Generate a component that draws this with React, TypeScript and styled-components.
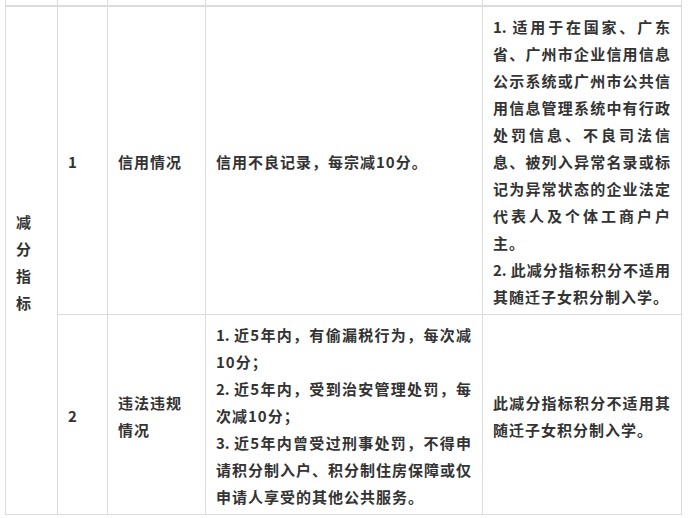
import React from "react";
import styled, { createGlobalStyle } from "styled-components";

const Global = createGlobalStyle`
  html, body {
    margin: 0;
    padding: 0;
    background: #fff;
  }
  body {
    font-family: "Noto Sans CJK SC", "Liberation Sans", sans-serif;
  }
`;

const Page = styled.div`
  padding: 0 6px 0 5px;
  width: 688px;
  height: 518px;
  box-sizing: border-box;
  overflow: hidden;
`;

const Table = styled.table`
  width: 677px;
  table-layout: fixed;
  border-collapse: collapse;
  color: #333;
  font-size: 15px;
  font-weight: bold;
  letter-spacing: 1px;
  line-height: 27px;
`;

const Cell = styled.td<{ $plain?: boolean }>`
  border: 1px solid #dcdcdc;
  padding: 6px 10px 4px 10px;
  vertical-align: middle;
  text-align: ${(p) => (p.$plain ? "left" : "justify")};
  word-break: break-all;
`;

const StubCell = styled.td`
  border: 1px solid #dcdcdc;
  border-top: none;
  border-bottom: 2px solid #dcdcdc;
  height: 5px;
  padding: 0;
`;

const Para = styled.div``;

const Num = styled.span`
  letter-spacing: 0;
  margin-right: 4px;
`;

const widths = [52, 50, 98, 277, 199];

type Item = { num?: string; text: string };

const rows: { no: string; name: string; rule: Item[]; note: Item[] }[] = [
  {
    no: "1",
    name: "信用情况",
    rule: [{ text: "信用不良记录，每宗减10分。" }],
    note: [
      {
        num: "1.",
        text: "适用于在国家、广东省、广州市企业信用信息公示系统或广州市公共信用信息管理系统中有行政处罚信息、不良司法信息、被列入异常名录或标记为异常状态的企业法定代表人及个体工商户户主。",
      },
      { num: "2.", text: "此减分指标积分不适用其随迁子女积分制入学。" },
    ],
  },
  {
    no: "2",
    name: "违法违规情况",
    rule: [
      { num: "1.", text: "近5年内，有偷漏税行为，每次减10分；" },
      { num: "2.", text: "近5年内，受到治安管理处罚，每次减10分；" },
      {
        num: "3.",
        text: "近5年内曾受过刑事处罚，不得申请积分制入户、积分制住房保障或仅申请人享受的其他公共服务。",
      },
    ],
    note: [{ text: "此减分指标积分不适用其随迁子女积分制入学。" }],
  },
];

const Lines = ({ items }: { items: Item[] }) => (
  <>
    {items.map((t) => (
      <Para key={t.text}>
        {t.num && <Num>{t.num}</Num>}
        {t.text}
      </Para>
    ))}
  </>
);

export default function App() {
  return (
    <Page>
      <Global />
      <Table>
        <colgroup>
          {widths.map((w, i) => (
            <col key={i} style={{ width: w }} />
          ))}
        </colgroup>
        <tbody>
          <tr>
            {widths.map((_, i) => (
              <StubCell key={i} />
            ))}
          </tr>
          {rows.map((r, i) => (
            <tr key={r.no}>
              {i === 0 && (
                <Cell rowSpan={2} $plain>
                  减分指标
                </Cell>
              )}
              <Cell $plain>{r.no}</Cell>
              <Cell $plain>{r.name}</Cell>
              <Cell>
                <Lines items={r.rule} />
              </Cell>
              <Cell>
                <Lines items={r.note} />
              </Cell>
            </tr>
          ))}
        </tbody>
      </Table>
    </Page>
  );
}
